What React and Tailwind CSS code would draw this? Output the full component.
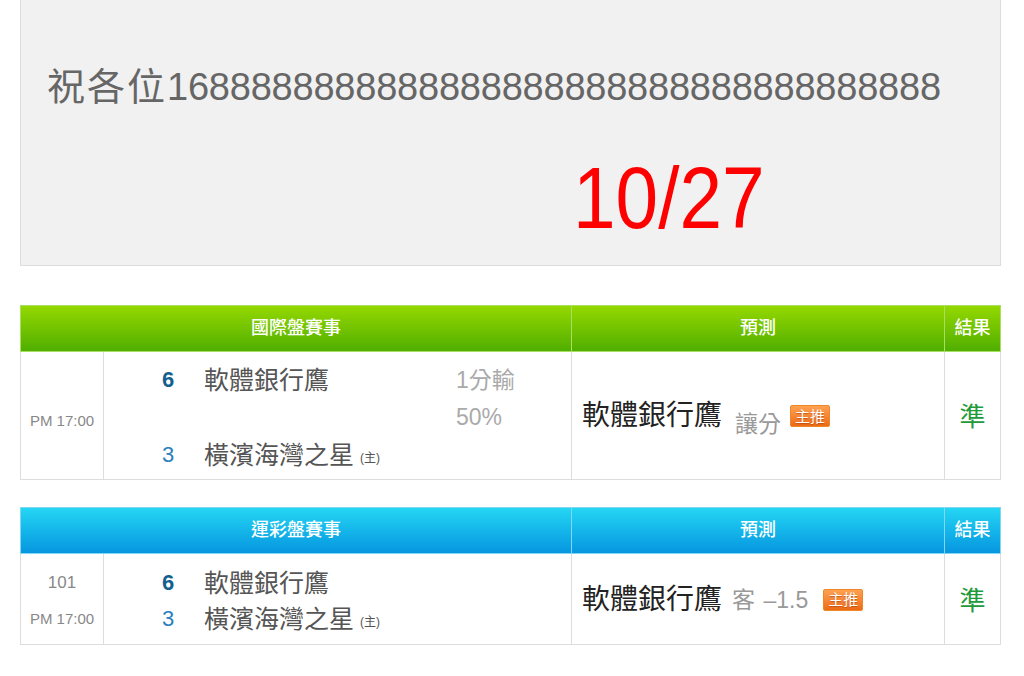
import React from "react";

const FONT = { fontFamily: '"Liberation Sans", "Noto Sans CJK TC", sans-serif' };

function Badge() {
  return (
    <span className="inline-flex h-[22px] w-[40px] items-center justify-center rounded-[2px] border border-[#f0862a] bg-linear-to-b from-[#ffa150] to-[#ec6a12] text-[15px] leading-none text-white [text-shadow:0_1px_1px_rgba(160,60,0,0.6)]">
      主推
    </span>
  );
}

function Header({ title, gradient, border }) {
  return (
    <div className={`grid h-[47px] grid-cols-[551px_373px_1fr] border ${border} ${gradient} text-[18px] font-medium text-white`}>
      <div className={`flex items-center justify-center border-r ${border}`}>{title}</div>
      <div className={`flex items-center justify-center border-r ${border}`}>預測</div>
      <div className="flex items-center justify-center">結果</div>
    </div>
  );
}

function Team({ num, name, strong, host }) {
  return (
    <div className="flex h-[36px] items-center">
      <span className={`w-[42px] text-[22px] leading-none ${strong ? "font-semibold text-[#13608f]" : "text-[#2a80bd]"}`}>
        {num}
      </span>
      <span className="text-[25px] leading-none text-[#555]">{name}</span>
      {host && <span className="ml-[6px] mt-[6px] text-[12px] text-[#555]">(主)</span>}
    </div>
  );
}

export default function App() {
  return (
    <div className="min-h-[676px] bg-white" style={FONT}>
      <div className="ml-[20px] w-[981px]">
        <div className="border-x border-b border-[#dcdcdc] bg-[#f1f1f1] pb-[24px] pl-[26px] pt-[64px]">
          <div className="text-[38px] leading-[46px] text-[#666]">
            <span className="tracking-[2px]">祝各位</span>
            <span className="tracking-[-0.22px]">1688888888888888888888888888888888888</span>
          </div>
          <div className="mt-[44px] pl-[526px]">
            <span className="inline-block origin-left scale-x-[0.87] text-[88px] leading-[87px] text-[#ff0000]">10/27</span>
          </div>
        </div>

        <div className="mt-[39px]">
          <Header title="國際盤賽事" gradient="bg-linear-to-b from-[#94d800] to-[#4fae00]" border="border-[#a8df63]" />
          <div className="grid h-[128px] grid-cols-[83px_468px_373px_1fr] border-x border-b border-[#dddddd]">
            <div className="flex items-center justify-center border-r border-[#dddddd] pt-[12px] text-[15px] text-[#888]">PM 17:00</div>
            <div className="flex border-r border-[#dddddd] pl-[58px] pt-[10px]">
              <div className="flex w-[294px] flex-col justify-between pb-[6px]">
                <Team num="6" name="軟體銀行鷹" strong />
                <Team num="3" name="橫濱海灣之星" host />
              </div>
              <div className="flex flex-col text-[23px] leading-[38px] text-[#aaa]">
                <span className="leading-[36px]">1分輸</span>
                <span>50%</span>
              </div>
            </div>
            <div className="flex items-center border-r border-[#dddddd] pl-[10px]">
              <span className="text-[28px] text-[#222]">軟體銀行鷹</span>
              <span className="ml-[13px] mt-[18px] text-[23px] text-[#999]">讓分</span>
              <span className="ml-[9px] mt-[2px]"><Badge /></span>
            </div>
            <div className="flex items-center justify-center pt-[4px] text-[26px] text-[#219a3a]">準</div>
          </div>
        </div>

        <div className="mt-[27px]">
          <Header title="運彩盤賽事" gradient="bg-linear-to-b from-[#25d6f3] to-[#0896e0]" border="border-[#7fd7f3]" />
          <div className="grid h-[91px] grid-cols-[83px_468px_373px_1fr] border-x border-b border-[#dddddd]">
            <div className="flex flex-col items-center justify-center border-r border-[#dddddd] pt-[4px] text-[#888]">
              <span className="flex h-[36px] items-center text-[17px]">101</span>
              <span className="flex h-[36px] items-center text-[15px]">PM 17:00</span>
            </div>
            <div className="flex flex-col justify-center border-r border-[#dddddd] pl-[58px] pt-[4px]">
              <Team num="6" name="軟體銀行鷹" strong />
              <Team num="3" name="橫濱海灣之星" host />
            </div>
            <div className="flex items-center border-r border-[#dddddd] pl-[10px] pt-[2px]">
              <span className="text-[28px] text-[#222]">軟體銀行鷹</span>
              <span className="ml-[10px] text-[23px] text-[#999]">客 <span className="ml-[2px]">–1.5</span></span>
              <span className="ml-[15px]"><Badge /></span>
            </div>
            <div className="flex items-center justify-center pt-[4px] text-[26px] text-[#219a3a]">準</div>
          </div>
        </div>
      </div>
    </div>
  );
}
